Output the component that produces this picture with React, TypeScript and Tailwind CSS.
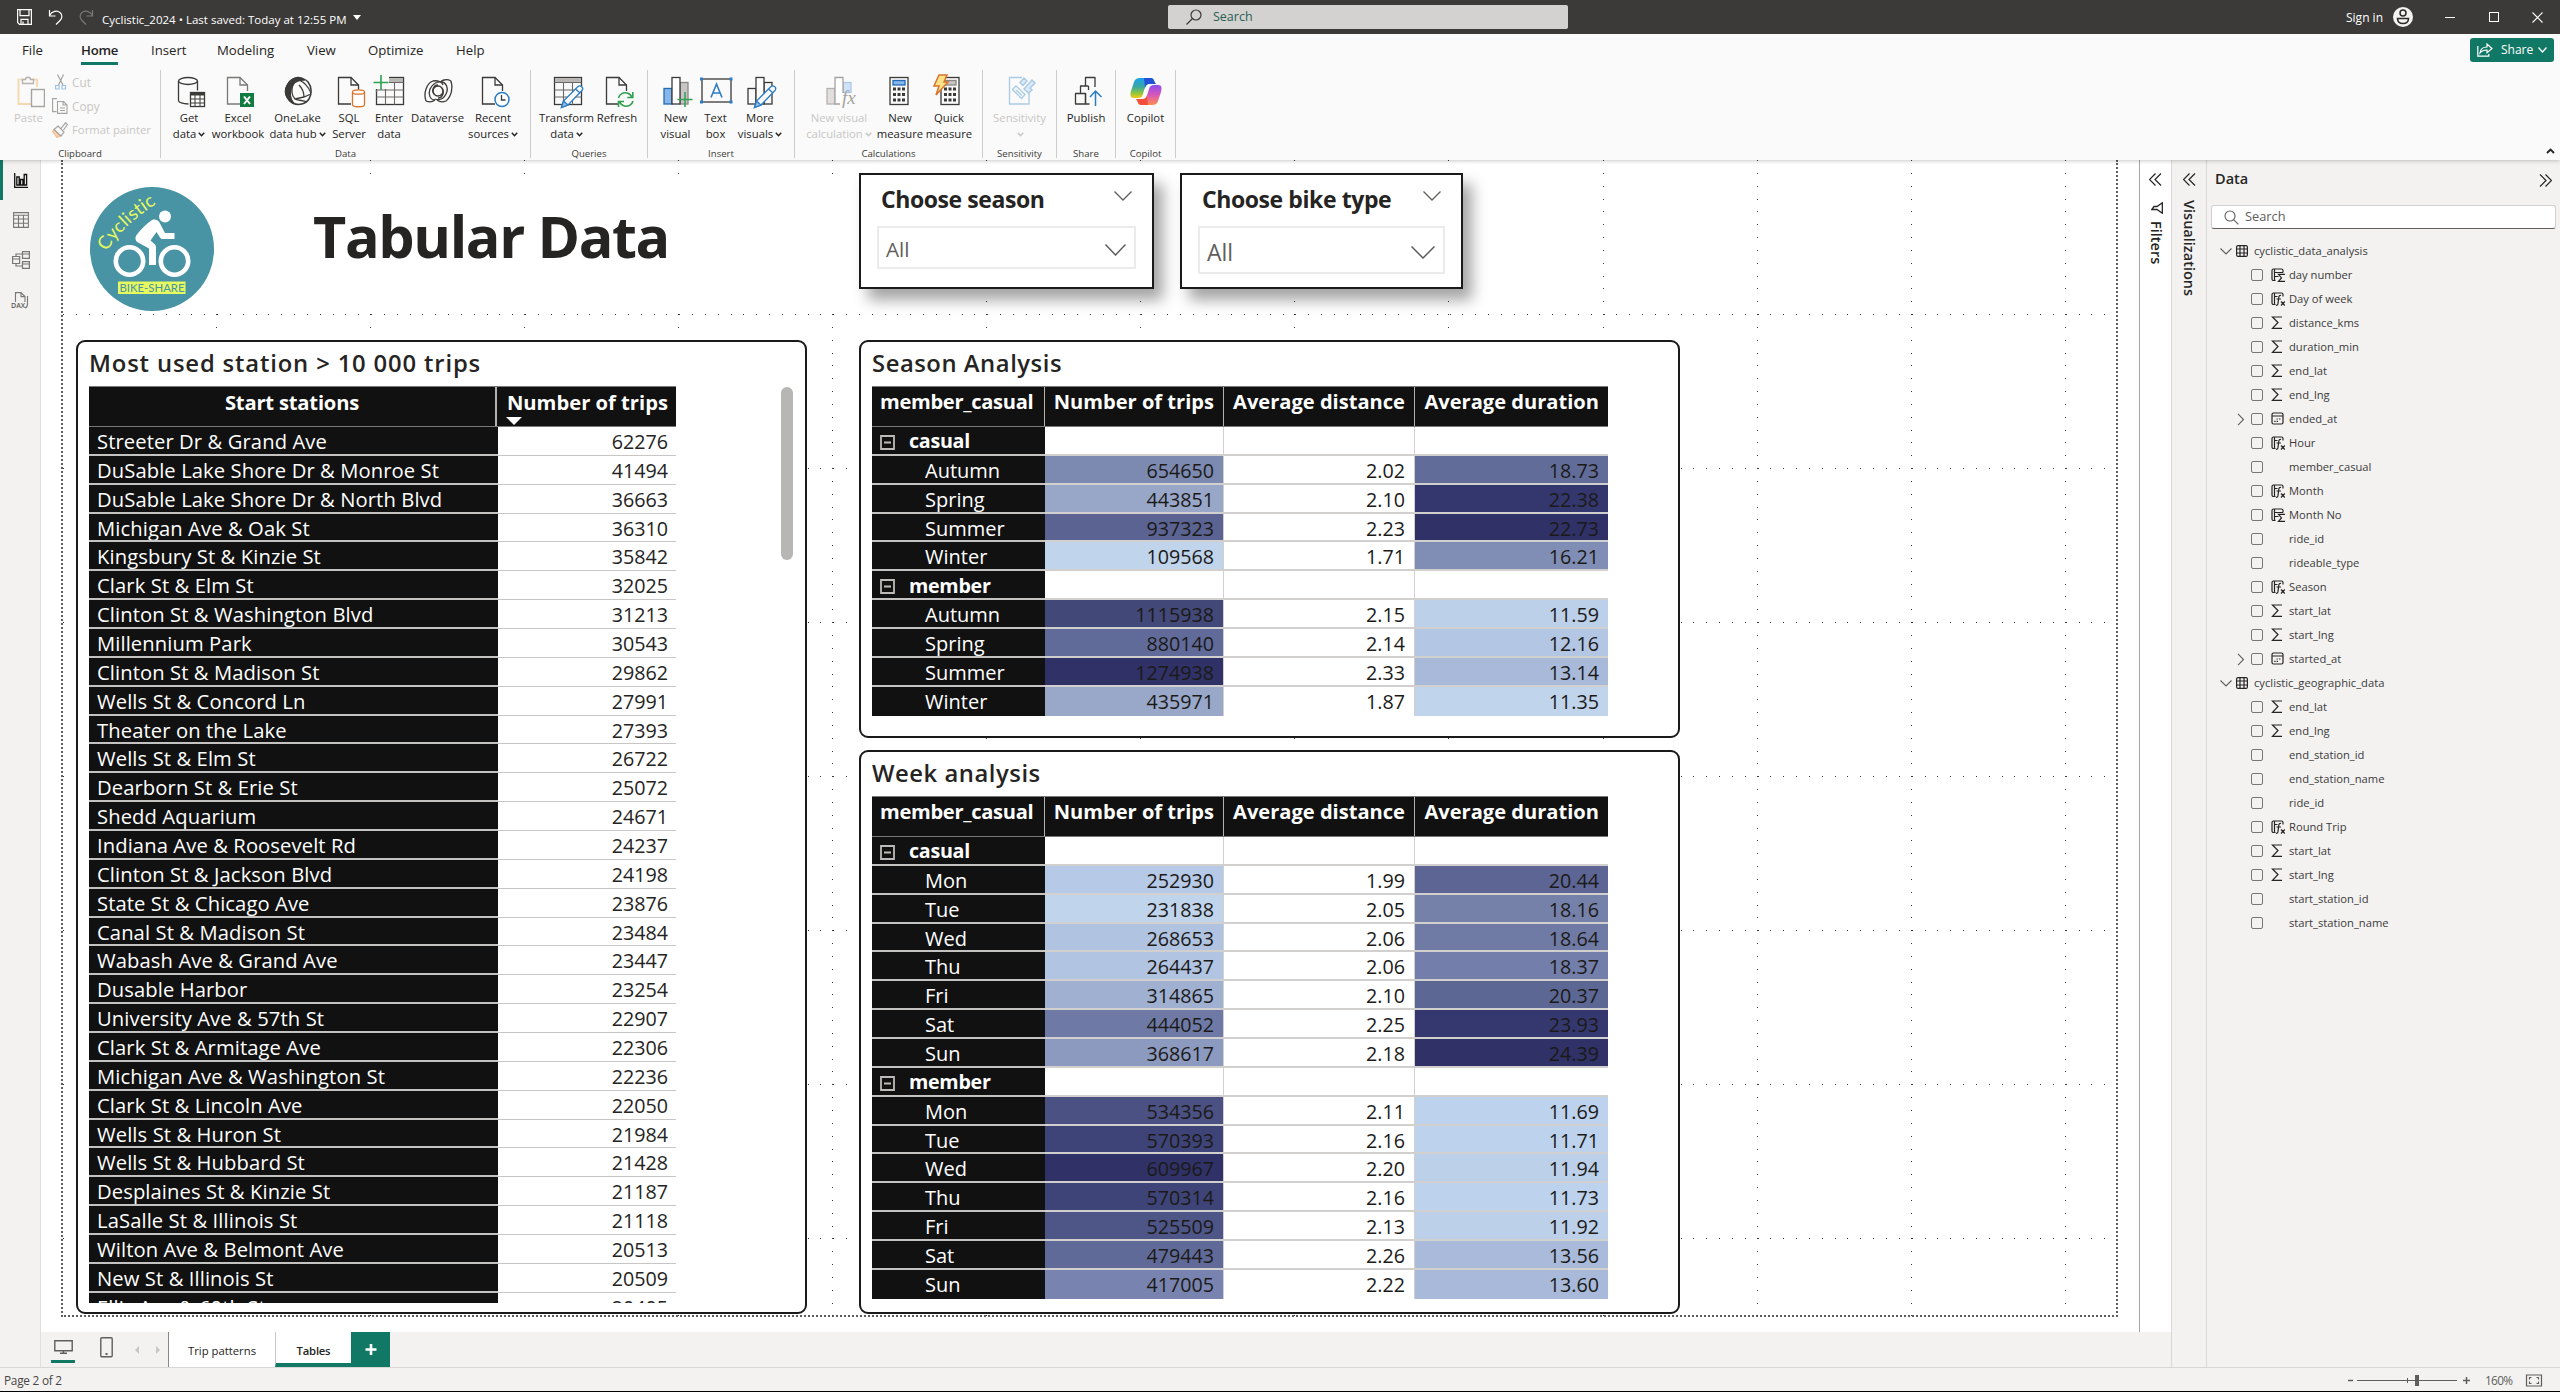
import React from "react";

type P = { children?: React.ReactNode };

/* ---------- ribbon icons ---------- */

const Ico = ({ children }: P) => (
  <svg width="32" height="34" viewBox="0 0 32 34" fill="none" stroke="#3b3a39" strokeWidth="1.3" className="overflow-visible">
    {children}
  </svg>
);

const Doc = () => (
  <>
    <path d="M18 29H5.500V2.500H18L25.500 10V16" />
    <path d="M18 2.500V10H25.500" />
  </>
);

const Pencil = () => (
  <>
    <path d="M30.500 11.500c1.500 1.200 1.600 2.600.5 4L17 30l-6.500 2.500L12.500 26 26.500 12c1.300-1.200 2.700-1.500 4-.5z" fill="#fafafa" stroke="#2b7cc4" />
    <path d="M12.500 26l4.500 4-6.500 2.500z" fill="#8fbdea" stroke="#2b7cc4" />
    <path d="M24.500 14l4.500 4" stroke="#2b7cc4" />
  </>
);

const Grid = () => (
  <>
    <rect x="3.500" y="2.500" width="27" height="27" fill="#fafafa" />
    <rect x="4" y="3" width="26" height="4.500" fill="#b9b7b5" stroke="none" />
    <path d="M3.500 7.500h27M3.500 15h27M3.500 22h27M12.500 7.500v22M21.500 7.500v22" strokeWidth="1.100" stroke="#6b6967" />
  </>
);

const icons: Record<string, React.ReactNode> = {
  get: (
    <Ico>
      <ellipse cx="15" cy="6" rx="9.500" ry="3.500" />
      <path d="M5.500 6v19.500c0 1.800 4 3.500 10 3.500M24.500 6v9.500" />
      <rect x="17.500" y="17.500" width="14" height="14" fill="#fff" />
      <path d="M17.500 19h14" strokeWidth="3" />
      <path d="M17.500 24h14M17.500 28h14M22 20v11M27 20v11" strokeWidth="1" />
    </Ico>
  ),
  excel: (
    <Ico>
      <g stroke="#7a7876"><Doc /></g>
      <rect x="18" y="18" width="14" height="14" fill="#107c41" stroke="none" />
      <path d="M22 21.500l6 7.500M28 21.500l-6 7.500" stroke="#fff" strokeWidth="2" />
    </Ico>
  ),
  lake: (
    <Ico>
      <path d="M8 6C13 2 22 2 26 7s4 12 1 17-11 7-16 4-8-8-7-13 2-7 4-9z" strokeWidth="1.500" />
      <path d="M8 7C3.500 10 2.500 16 4 20s4 7 8 9c-4-5-5-12-1-20z" fill="#3b3a39" />
      <path d="M9 6c3-4 10-5 13-1-5 0-9 1-11 5z" fill="#3b3a39" />
      <path d="M11 9c-2 7-1 12 2 15l9-2M17 10c3 3 5 7 5 12l7-3M13 24c4 2 8 1 12 3M17 5c5 2 9 6 12 13" />
    </Ico>
  ),
  sql: (
    <Ico>
      <Doc />
      <path d="M19.500 17v12.500c0 3 12 3 12 0V17" fill="#fff" stroke="#d9742b" />
      <ellipse cx="25.500" cy="17" rx="6" ry="2.200" fill="#fff" stroke="#d9742b" />
    </Ico>
  ),
  enter: (
    <Ico>
      <Grid />
      <path d="M0 0h16v14H0z" fill="#fafafa" stroke="none" />
      <path d="M12.500 14v2M3.500 15v2" stroke="#6b6967" />
      <path d="M8 0v15M.5 7.500h15" stroke="#2ea04f" strokeWidth="1.600" />
    </Ico>
  ),
  dataverse: (
    <Ico>
      <path d="M29 6c-5-3-10 0-10 1M29 6c2 6 1 15-5 20-5 2-9-1-9-1M4 26c5 2 9-1 9-1M4 26C1 18 5 8 11 6c5-1 9 1 10 4" />
      <path d="M19 7c5 0 8 6 5 12s-8 6-11 5M13 25c-5 0-7-6-5-11s8-8 11-7" />
      <circle cx="16" cy="16" r="5" />
      <path d="M20 13c3 5 0 10-4 10M12 19c-3-4 0-9 4-9" />
    </Ico>
  ),
  recent: (
    <Ico>
      <Doc />
      <circle cx="25" cy="24.500" r="7" fill="#fff" stroke="#2b7cc4" strokeWidth="1.500" />
      <path d="M24.500 20v5h4" />
    </Ico>
  ),
  transform: (<Ico><Grid /><Pencil /></Ico>),
  refresh: (
    <Ico>
      <Doc />
      <g stroke="#2ea04f" strokeWidth="1.600">
        <path d="M17.500 23c1-4 5-6 8.500-5 3 .8 4.500 3 5 4.500M31.800 17v5.500h-5.500M32 26c-1 4-5 6-8.500 5-3-.8-4.500-3-5-4.500M17.500 32v-5.500H23" />
      </g>
    </Ico>
  ),
  newvisual: (
    <Ico>
      <rect x="4" y="13.500" width="8" height="15.500" fill="#89b6e8" stroke="#1f6cb8" />
      <rect x="20" y="7.500" width="8" height="21.500" fill="#c8c6c4" stroke="#8a8886" />
      <rect x="12" y="2.500" width="8" height="26.500" fill="#fff" />
      <path d="M25 17v15M17.500 24.500h15" stroke="#2ea04f" strokeWidth="1.500" />
    </Ico>
  ),
  textbox: (
    <Ico>
      <rect x="2" y="4" width="29" height="23" />
      <path d="M0 2.500h3v3H0zM29.500 2.500h3v3h-3zM0 25.500h3v3H0zM29.500 25.500h3v3h-3z" fill="#2b7cc4" stroke="none" />
      <path d="M11 22.500L16.500 9 22 22.500M13 18h7" stroke="#2b7cc4" strokeWidth="1.600" />
    </Ico>
  ),
  more: (
    <Ico>
      <rect x="4" y="13.500" width="8" height="15.500" />
      <rect x="20" y="7.500" width="8" height="21.500" />
      <rect x="12" y="2.500" width="8" height="26.500" fill="#fff" />
      <Pencil />
    </Ico>
  ),
  calc: (
    <Ico>
      <rect x="4" y="13.500" width="8" height="15.500" fill="#e1dfdd" stroke="#b5b3b1" />
      <rect x="20" y="7.500" width="8" height="10" fill="#cfe2f6" stroke="#a8c9ea" />
      <path d="M20 18V2.500h-8V29h5" fill="#fff" stroke="#a5a3a1" />
      <text x="19" y="29" fontSize="19" fontStyle="italic" fill="#a5a3a1" stroke="none" className="font-['Liberation_Serif']">fx</text>
    </Ico>
  ),
  measure: (
    <Ico>
      <rect x="6" y="2.500" width="18" height="27" />
      <rect x="9" y="5.500" width="12" height="4.500" fill="#89b6e8" stroke="#1f6cb8" />
      <path d="M9 14h12M9 19.500h12M9 25h12" strokeWidth="3" strokeDasharray="3 1.500" />
    </Ico>
  ),
  quick: (
    <Ico>
      <rect x="8" y="2.500" width="18" height="27" />
      <rect x="12" y="5.500" width="11" height="4.500" fill="#c8c6c4" stroke="#8a8886" />
      <path d="M11 14h12M11 19.500h12M11 25h12" strokeWidth="3" strokeDasharray="3 1.500" />
      <path d="M6 0h8l-3 7h4L3 20l3-9H1z" fill="#fce38a" stroke="#d9742b" strokeWidth="1.500" />
    </Ico>
  ),
  sens: (
    <Ico>
      <path d="M18 2.500H5.500V29H25V17" stroke="#a9cbe6" />
      <path d="M8.500 14.500l3.500-3.500 9 8.500-3.500 4zM12 15l6 5.500" stroke="#a9cbe6" />
      <path d="M16 7.500l4-4.500 3 3-4 4.500zM20 14l8-9 3 3-5 5 2 2-3.500 3z" stroke="#a9cbe6" strokeWidth="1.500" fill="#dcebf7" />
    </Ico>
  ),
  publish: (
    <Ico>
      <path d="M5.500 18.500h10V29h-10zM10.500 18V11h8M15.500 11V2.500H25V12" strokeLinejoin="round" />
      <path d="M15.500 29V18M18.500 11v4M15.500 29h4" />
      <path d="M25.500 31V16M20 22l5.500-6 6 6" stroke="#2b7cc4" strokeWidth="1.500" />
    </Ico>
  ),
  copilot: (
    <svg width="32" height="34" viewBox="0 0 32 34" fill="none">
      <defs>
        <linearGradient id="ca" x1="0" y1="0" x2="0" y2="1"><stop offset="0" stopColor="#1b9ff0" /><stop offset=".45" stopColor="#3aa99f" /><stop offset=".75" stopColor="#8dc63f" /><stop offset="1" stopColor="#f6c915" /></linearGradient>
        <linearGradient id="cb" x1="0" y1="0" x2="0" y2="1"><stop offset="0" stopColor="#8b4df0" /><stop offset=".5" stopColor="#d957b8" /><stop offset="1" stopColor="#ff8f4a" /></linearGradient>
      </defs>
      <path d="M10 3h11c3 0 3 4 5 6h-7c-3 0-4 3-6 10-1 3-2 4-5 4H4c-4 0-4-3-3-7l3-9c1-3 3-4 6-4z" fill="url(#ca)" />
      <path d="M22 30H11c-3 0-3-4-5-6h7c3 0 4-3 6-10 1-3 2-4 5-4h4c4 0 4 3 3 7l-3 9c-1 3-3 4-6 4z" fill="url(#cb)" />
      <path d="M14 3h7c3 0 3 4 5 6h-7c-2 0-3 1-4 4z" fill="#2352d8" />
      <path d="M18 30h-7c-3 0-3-4-5-6h7c2 0 3-1 4-3z" fill="#f2503b" />
    </svg>
  ),
};

const Mini = () => (
  <svg width="7" height="5" viewBox="0 0 7 5" fill="none" stroke="currentColor" strokeWidth="1.500" className="ml-[2px] inline-block align-middle">
    <path d="M.8.8l2.700 2.900L6.200.8" />
  </svg>
);

const Chev = ({ w, h, s = 1.3 }: { w: number; h: number; s?: number }) => (
  <svg width={w} height={h} viewBox={`0 0 ${w} ${h}`} fill="none" stroke="currentColor" strokeWidth={s}>
    <path d={`M.5 .5L${w / 2} ${h - 1}L${w - 0.5} .5`} />
  </svg>
);

const Btn = ({ w, icon, a, b, chev, off }: { w: string; icon: string; a: string; b?: string; chev?: boolean; off?: boolean }) => (
  <div className={`flex shrink-0 flex-col items-center whitespace-nowrap pt-[5px] text-[11.3px] leading-4 ${w} ${off ? "text-[#c8c6c4]" : "text-[#252423]"}`}>
    {icons[icon]}
    <span className="mt-px h-4">{a}</span>
    <span className="h-4">{b}{chev && <Mini />}</span>
  </div>
);

const Group = ({ w, name, pad = "", children }: { w: string; name: string; pad?: string; children: React.ReactNode }) => (
  <div className={`flex h-[88px] shrink-0 flex-col border-r border-[#cfcdcb] ${w}`}>
    <div className={`flex h-[72px] ${pad}`}>{children}</div>
    <div className="mt-1 text-center text-[9.6px] leading-4 text-[#3b3a39]">{name}</div>
  </div>
);

const TitleBar = () => (
  <header className="flex h-[34px] items-center bg-[#3b3a38] text-white">
    <div className="flex w-[1168px] items-center pl-[17px]">
      <svg width="15" height="16" viewBox="0 0 15 16" fill="none" stroke="#fff" strokeWidth="1.200"><path d="M.6.6h13.800v14.800H2.500L.6 13.500zM3 .6v6h9v-6M4 15.400v-5h7v5M6 12.500v3" /></svg>
      <svg width="15" height="16" viewBox="0 0 15 16" fill="none" stroke="#fff" strokeWidth="1.200" className="ml-4"><path d="M1.500 1v6h6M1.500 6.500C4 2 9 1 12 3.500s2 6 0 8L8 15.500" /></svg>
      <svg width="15" height="16" viewBox="0 0 15 16" fill="none" stroke="#797775" strokeWidth="1.200" className="ml-4"><path d="M13.500 1v6h-6M13.500 6.500C11 2 6 1 3 3.500s-2 6 0 8L7 15.500" /></svg>
      <span className="ml-[8px] whitespace-nowrap pt-1.5 text-[11.500px]">Cyclistic_2024 • Last saved: Today at 12:55 PM</span>
      <span className="ml-[6px] h-0 w-0 border-x-4 border-t-[5px] border-x-transparent border-t-white" />
    </div>
    <div className="flex h-6 w-[400px] items-center rounded-[2px] bg-[#d3d2d0] pl-[18px] text-[12.500px] text-[#2a5f53]">
      <svg width="16" height="16" viewBox="0 0 16 16" fill="none" stroke="#3b3a39" strokeWidth="1.200"><circle cx="10" cy="6" r="5" /><path d="M6.500 9.500L.5 15.500" /></svg>
      <span className="ml-[11px]">Search</span>
    </div>
    <div className="ml-auto flex items-center pr-[17px]">
      <span className="pt-px text-[12px]">Sign in</span>
      <svg width="20" height="20" viewBox="0 0 20 20" className="ml-[10px]"><circle cx="10" cy="10" r="10" fill="#f3f2f1" /><g fill="none" stroke="#2b2a29" strokeWidth="1.500"><circle cx="10" cy="6" r="3" /><path d="M4.500 11.500h11c0 3.500-2.500 5-5.500 5s-5.500-1.500-5.500-5z" /></g></svg>
      <span className="ml-8 h-px w-[10px] bg-white" />
      <span className="ml-[34px] size-[10px] border border-white" />
      <svg width="11" height="11" viewBox="0 0 11 11" stroke="#fff" strokeWidth="1.100" className="ml-[33px]"><path d="M.5.5l10 10M10.500.5l-10 10" /></svg>
    </div>
  </header>
);

const MenuBar = () => (
  <nav className="flex h-9 items-start bg-[#fafafa] pl-[22px] text-[13.200px] leading-[30px] text-[#252423]">
    <span className="w-[59px] pt-[1px]">File</span>
    <span className="w-[70px] pt-[1px] font-semibold"><span className="inline-block h-[30px] border-b-[3px] border-[#117865] tracking-[-0.02em]">Home</span></span>
    <span className="w-[66px] pt-[1px]">Insert</span>
    <span className="w-[90px] pt-[1px]">Modeling</span>
    <span className="w-[61px] pt-[1px]">View</span>
    <span className="w-[88px] pt-[1px]">Optimize</span>
    <span className="pt-[1px]">Help</span>
    <div className="ml-auto mr-[6px] mt-1 flex h-6 w-[84px] items-center rounded-[3px] bg-[#117865] pl-[7px] text-[12px] text-white">
      <svg width="16" height="14" viewBox="0 0 16 14" fill="none" stroke="#fff" strokeWidth="1.200"><path d="M.8 3v10.200h11V11M3 10c.5-4 3-6 7-6V1l5 4.500-5 4.300V7C7 7 5 7.500 3 10z" /></svg>
      <span className="ml-[8px] mr-[5px]">Share</span>
      <Chev w={9} h={6} />
    </div>
  </nav>
);

const Ribbon = () => (
  <div className="relative z-10 flex h-[90px] bg-[#fafafa] shadow-[0_1px_4px_rgba(0,0,0,0.22)] [clip-path:inset(0_0_-8px_0)]">
    <Group w="w-[161px]" name="Clipboard">
      <div className="flex w-[57px] shrink-0 flex-col items-center pt-[5px] text-[11.300px] leading-4 text-[#c8c6c4]">
        <svg width="32" height="34" viewBox="0 0 32 34" fill="none" strokeWidth="1.400">
          <path d="M10 4.500H5.500V29H18M19 4.500h5V12" stroke="#f3d9b1" strokeWidth="2" />
          <path d="M9.500 8.500v-4h3c0-3 5-3 5 0h3v4z" stroke="#b5b3b1" fill="#fafafa" />
          <rect x="18.500" y="14.500" width="13" height="17" stroke="#a5a3a1" fill="#fafafa" />
        </svg>
        <span className="mt-px">Paste</span>
      </div>
      <div className="-ml-[2px] flex flex-col text-[11.800px] leading-6 text-[#c8c6c4]">
        <span className="flex h-6 items-center">
          <svg width="12" height="16" viewBox="0 0 12 16" fill="none" stroke="#a5a3a1" strokeWidth="1.200"><path d="M2.500.5L8 11M8.500.5L3.500 11" /><path d="M.6 11.500h3.500V15H.6zM7 11.500h3.500V15H7z" stroke="#9cc3e8" /></svg>
          <span className="ml-[5px]">Cut</span>
        </span>
        <span className="flex h-6 items-center">
          <svg width="16" height="16" viewBox="0 0 16 16" fill="none" stroke="#a5a3a1" strokeWidth="1.100" className="-ml-[3px]"><path d="M5 .6H.6v13h4M5.500 3.500h6l3.500 3.500v8.400H5.500zM11 3.500V7h4M8 10h5M8 12.500h5" /></svg>
          <span className="ml-[4px]">Copy</span>
        </span>
        <span className="flex h-6 items-center whitespace-nowrap">
          <svg width="16" height="16" viewBox="0 0 16 16" fill="none" stroke="#a5a3a1" strokeWidth="1.200" className="-ml-[3px]"><path d="M2 7.500l6 6.500-3 1.500L.8 9.500z" fill="#f7d5b0" stroke="#f0c08c" /><path d="M6 4l6 6-3 4-7-6.500zM9 6.500L13.500.8l2 1.700L11.500 8" /></svg>
          <span className="ml-[4px] text-[11.300px]">Format painter</span>
        </span>
      </div>
    </Group>
    <Group w="w-[370px]" name="Data" pad="pl-[3px]">
      <Btn w="w-[50px]" icon="get" a="Get" b="data" chev />
      <Btn w="w-[48px]" icon="excel" a="Excel" b="workbook" />
      <Btn w="w-[71px]" icon="lake" a="OneLake" b="data hub" chev />
      <Btn w="w-[32px]" icon="sql" a="SQL" b="Server" />
      <Btn w="w-[48px]" icon="enter" a="Enter" b="data" />
      <Btn w="w-[49px]" icon="dataverse" a="Dataverse" />
      <Btn w="w-[62px]" icon="recent" a="Recent" b="sources" chev />
    </Group>
    <Group w="w-[117px]" name="Queries" pad="pl-[6px]">
      <Btn w="w-[59px]" icon="transform" a="Transform" b="data" chev />
      <Btn w="w-[42px]" icon="refresh" a="Refresh" />
    </Group>
    <Group w="w-[147px]" name="Insert" pad="pl-[8px]">
      <Btn w="w-[39px]" icon="newvisual" a="New" b="visual" />
      <Btn w="w-[41px]" icon="textbox" a="Text" b="box" />
      <Btn w="w-[48px]" icon="more" a="More" b="visuals" chev />
    </Group>
    <Group w="w-[188px]" name="Calculations" pad="pl-[8px]">
      <Btn w="w-[72px]" icon="calc" a="New visual" b="calculation" chev off />
      <Btn w="w-[50px]" icon="measure" a="New" b="measure" />
      <Btn w="w-[48px]" icon="quick" a="Quick" b="measure" />
    </Group>
    <Group w="w-[74px]" name="Sensitivity"><Btn w="w-full" icon="sens" a="Sensitivity" chev off /></Group>
    <Group w="w-[59px]" name="Share"><Btn w="w-full" icon="publish" a="Publish" /></Group>
    <Group w="w-[60px]" name="Copilot"><Btn w="w-full" icon="copilot" a="Copilot" /></Group>
    <svg width="9" height="6" viewBox="0 0 9 6" fill="none" stroke="#252423" strokeWidth="1.800" className="ml-auto mr-[5px] mt-[78px]"><path d="M1 5l3.500-3.500L8 5" /></svg>
  </div>
);

/* ---------- report page ---------- */

const vLines = Array.from({ length: 13 }, (_, i) => 154.05 * (i + 1));
const hLines = Array.from({ length: 7 }, (_, i) => 154.05 * (i + 1));

const Dots = () => (
  <svg width="2054" height="1156" className="absolute left-0 top-0" stroke="#3b3a39" strokeWidth="1" strokeDasharray="1 11.838" shapeRendering="crispEdges">
    {vLines.map((x) => <line key={x} x1={Math.round(x) - 0.5} x2={Math.round(x) - 0.5} y1="0" y2="1156" />)}
    {hLines.map((y) => <line key={y} x1="0" x2="2054" y1={Math.round(y) + 0.5} y2={Math.round(y) + 0.5} />)}
  </svg>
);

const Logo = () => (
  <svg width="124" height="126" viewBox="0 0 124 126">
    <defs><path id="arc" d="M17 65.500Q31 41 66 18" /></defs>
    <circle cx="62" cy="63" r="62" fill="#4893a4" />
    <text fontSize="18.500" fill="#e6f95f" letterSpacing="0.300" className="font-['Lato']"><textPath href="#arc">Cyclistic</textPath></text>
    <g fill="none" stroke="#fff" strokeWidth="4.600">
      <circle cx="39.500" cy="75" r="13.700" />
      <circle cx="84.500" cy="75" r="13.700" />
    </g>
    <circle cx="75" cy="30.500" r="6" fill="#fff" />
    <path d="M62 34c3-1 6 0 7.500 2.500L75 47h9.500v6H72.500c-1 0-2-.7-2.500-1.500l-3.500-5.500-6 8.500 4 3.500c1 .8 1.500 2 1.500 3.500V79h-7V62.500L48 56.500c-2.500-1.500-3.500-4.500-1.500-7.500 5-6 10-11.500 15.500-15z" fill="#fff" />
    <path d="M28 95.500h67.500v12.500H28z" fill="#e6f95f" />
    <text x="29.500" y="105.800" fontSize="11" fill="#4893a4" textLength="65" lengthAdjust="spacingAndGlyphs" className="font-['Lato']">BIKE-SHARE</text>
  </svg>
);

const stations: [string, string][] = [
  ["Streeter Dr & Grand Ave", "62276"],
  ["DuSable Lake Shore Dr & Monroe St", "41494"],
  ["DuSable Lake Shore Dr & North Blvd", "36663"],
  ["Michigan Ave & Oak St", "36310"],
  ["Kingsbury St & Kinzie St", "35842"],
  ["Clark St & Elm St", "32025"],
  ["Clinton St & Washington Blvd", "31213"],
  ["Millennium Park", "30543"],
  ["Clinton St & Madison St", "29862"],
  ["Wells St & Concord Ln", "27991"],
  ["Theater on the Lake", "27393"],
  ["Wells St & Elm St", "26722"],
  ["Dearborn St & Erie St", "25072"],
  ["Shedd Aquarium", "24671"],
  ["Indiana Ave & Roosevelt Rd", "24237"],
  ["Clinton St & Jackson Blvd", "24198"],
  ["State St & Chicago Ave", "23876"],
  ["Canal St & Madison St", "23484"],
  ["Wabash Ave & Grand Ave", "23447"],
  ["Dusable Harbor", "23254"],
  ["University Ave & 57th St", "22907"],
  ["Clark St & Armitage Ave", "22306"],
  ["Michigan Ave & Washington St", "22236"],
  ["Clark St & Lincoln Ave", "22050"],
  ["Wells St & Huron St", "21984"],
  ["Wells St & Hubbard St", "21428"],
  ["Desplaines St & Kinzie St", "21187"],
  ["LaSalle St & Illinois St", "21118"],
  ["Wilton Ave & Belmont Ave", "20513"],
  ["New St & Illinois St", "20509"],
  ["Ellis Ave & 60th St", "20405"],
];

const StationTable = () => (
  <div className="mt-[7px] h-[917px] w-[587px] overflow-hidden text-[19.700px]">
    <div className="flex h-[41px] border-y border-[#7a7876] bg-[#111] text-[20.200px] font-bold text-white">
      <div className="w-[408px] border-r-2 border-[#b3b0ad] text-center leading-[31px] tracking-[-0.01em]">Start stations</div>
      <div className="flex-1 whitespace-nowrap pr-2 text-right leading-[31px]">
        Number of trips
        <div className="-mt-px ml-[9px] h-0 w-0 border-x-8 border-t-8 border-x-transparent border-t-white" />
      </div>
    </div>
    {stations.map(([name, n]) => (
      <div key={name} className="flex h-[28.870px] leading-[29.500px]">
        <div className="w-[409px] overflow-hidden whitespace-nowrap border-b-2 border-[#c5c3c1] bg-[#111] pl-2 text-[20.200px] tracking-[0.005em] text-white">{name}</div>
        <div className="flex-1 border-b border-[#c8c6c4] pr-2 text-right text-[#252423]">{n}</div>
      </div>
    ))}
  </div>
);

type Row = [string, string?, string?, string?, string?, string?];

const season: Row[] = [
  ["casual"],
  ["Autumn", "654650", "bg-[#7c8ab1]", "2.02", "18.73", "bg-[#616c99]"],
  ["Spring", "443851", "bg-[#98a6c8]", "2.10", "22.38", "bg-[#34376d]"],
  ["Summer", "937323", "bg-[#5a6391]", "2.23", "22.73", "bg-[#2f3167]"],
  ["Winter", "109568", "bg-[#c0d4ec]", "1.71", "16.21", "bg-[#808eb5]"],
  ["member"],
  ["Autumn", "1115938", "bg-[#424878]", "2.15", "11.59", "bg-[#bcd0e9]"],
  ["Spring", "880140", "bg-[#606b99]", "2.14", "12.16", "bg-[#b3c6e3]"],
  ["Summer", "1274938", "bg-[#2f3167]", "2.33", "13.14", "bg-[#a8b9d9]"],
  ["Winter", "435971", "bg-[#99a7c9]", "1.87", "11.35", "bg-[#c0d4ec]"],
];

const week: Row[] = [
  ["casual"],
  ["Mon", "252930", "bg-[#b6c9e6]", "1.99", "20.44", "bg-[#5c6593]"],
  ["Tue", "231838", "bg-[#c0d4ec]", "2.05", "18.16", "bg-[#7681aa]"],
  ["Wed", "268653", "bg-[#b0c3e1]", "2.06", "18.64", "bg-[#707ba5]"],
  ["Thu", "264437", "bg-[#b1c4e2]", "2.06", "18.37", "bg-[#737faa]"],
  ["Fri", "314865", "bg-[#9fb0d1]", "2.10", "20.37", "bg-[#5d6794]"],
  ["Sat", "444052", "bg-[#6e7aa5]", "2.25", "23.93", "bg-[#35386e]"],
  ["Sun", "368617", "bg-[#8c9abf]", "2.18", "24.39", "bg-[#2f3167]"],
  ["member"],
  ["Mon", "534356", "bg-[#4b5183]", "2.11", "11.69", "bg-[#bdd2ec]"],
  ["Tue", "570393", "bg-[#3e4477]", "2.16", "11.71", "bg-[#bdd2ec]"],
  ["Wed", "609967", "bg-[#2f3167]", "2.20", "11.94", "bg-[#bcd0ea]"],
  ["Thu", "570314", "bg-[#3e4477]", "2.16", "11.73", "bg-[#bdd2ec]"],
  ["Fri", "525509", "bg-[#4e5587]", "2.13", "11.92", "bg-[#bcd0ea]"],
  ["Sat", "479443", "bg-[#606a98]", "2.26", "13.56", "bg-[#a9badb]"],
  ["Sun", "417005", "bg-[#7884af]", "2.22", "13.60", "bg-[#a8b9da]"],
];

const Matrix = ({ rows }: { rows: Row[] }) => (
  <div className="w-[736px] text-[19.700px]">
    <div className="grid h-[41px] grid-cols-[173px_179px_191px_193px] border-y border-[#7a7876] bg-[#111] text-right text-[20.100px] font-bold leading-[30px] text-white">
      <div className="whitespace-nowrap border-r border-[#b3b0ad] pl-[8px] text-left tracking-[-0.015em]">member_casual</div>
      <div className="whitespace-nowrap border-r border-[#b3b0ad] pr-[9px]">Number of trips</div>
      <div className="whitespace-nowrap border-r border-[#b3b0ad] pr-[9px]">Average distance</div>
      <div className="whitespace-nowrap pr-[9px]">Average duration</div>
    </div>
    {rows.map(([name, trips, tc, dist, dur, dc], i) => {
      const last = i === rows.length - 1 ? "" : "border-b-2";
      return (
        <div key={i} className="grid h-[28.870px] grid-cols-[173px_179px_191px_193px] grid-rows-[28.870px] text-right leading-[30px] text-[#1b1a19]">
          {trips ? (
            <div className={`overflow-hidden border-[#c5c3c1] bg-[#111] pl-[53px] text-left text-[20px] text-white ${last}`}>{name}</div>
          ) : (
            <div className={`flex items-center border-[#c5c3c1] bg-[#111] pl-2 font-bold tracking-[-0.015em] text-white ${last}`}>
              <svg width="15" height="15" viewBox="0 0 15 15" fill="none" stroke="#bdbbb9" strokeWidth="1.800" className="mr-[14px] mt-[4px]"><path d="M1 1h13v13H1zM4 7.500h7" /></svg>
              <span className="pt-[2px]">{name}</span>
            </div>
          )}
          <div className={`border-r border-[#d2d0ce] pr-[9px] ${tc ?? "bg-white"} ${last}`}>{trips}</div>
          <div className={`border-r border-[#d2d0ce] bg-white pr-[9px] ${last}`}>{dist}</div>
          <div className={`border-[#d2d0ce] pr-[9px] ${dc ?? "bg-white"} ${last}`}>{dur}</div>
        </div>
      );
    })}
  </div>
);

const Slicer = ({ w, title, box, all, cw, ch }: { w: string; title: string; box: string; all: string; cw: number; ch: number }) => (
  <div className={`h-[116px] border-2 border-[#1a1a1a] bg-white px-[16px] pt-[8px] shadow-[9px_11px_14px_rgba(0,0,0,0.36)] ${w}`}>
    <div className="flex items-start justify-between pl-[4px] pr-1 text-[#605e5c]">
      <span className="whitespace-nowrap text-[23px] font-bold leading-8 tracking-[-0.018em] text-[#252423]">{title}</span>
      <span className="mt-[8px]"><Chev w={18} h={10} /></span>
    </div>
    <div className={`mt-[11px] flex items-center justify-between border-2 border-[#ebebeb] pl-[7px] pr-[8px] pt-[4px] text-[#605e5c] ${box}`}>
      <span className={all}>All</span>
      <Chev w={cw} h={ch} s={1.5} />
    </div>
  </div>
);

const panel = "rounded-[9px] border-2 border-[#1a1a1a] bg-white";
const heading = "whitespace-nowrap text-[23.800px] leading-8 font-semibold text-[#252423]";

const ReportPage = () => (
  <main className="h-[1172px] w-[2098px] bg-white pl-5">
    <div className="relative h-[1157px] w-[2057px] border-x-2 border-b-2 border-dotted border-[#605e5c]">
      <Dots />
      <div className="relative flex h-[180px]">
        <div className="h-[149px] w-[178px] bg-white pl-[27px] pt-[26px]"><Logo /></div>
        <div className="mt-4 h-[134px] w-[600px] bg-white pl-[72px] pt-[20px]">
          <h1 className="whitespace-nowrap text-[57.500px] font-bold leading-[80px] tracking-[-0.024em] text-[#252423]">Tabular Data</h1>
        </div>
        <div className="ml-[18px] mt-[13px] flex gap-[26px]">
          <Slicer w="w-[295px]" title="Choose season" box="h-[43px]" all="text-[20.700px]" cw={21} ch={12} />
          <Slicer w="w-[283px]" title="Choose bike type" box="h-[48px]" all="text-[23px]" cw={24} ch={13} />
        </div>
      </div>
      <div className="relative flex pl-[13px]">
        <section className={`flex h-[974px] w-[731px] justify-between pl-[11px] pr-[12px] pt-[4px] ${panel}`}>
          <div>
            <h2 className={`${heading} pt-[1px] tracking-[0.036em]`}>Most used station &gt; 10 000 trips</h2>
            <StationTable />
          </div>
          <div className="mt-[41px] h-[173px] w-[12px] rounded-full bg-[#b8b6b4]" />
        </section>
        <div className="ml-[52px] flex flex-col gap-[12px]">
          <section className={`h-[398px] w-[821px] pl-[11px] pt-[5px] ${panel}`}>
            <h2 className={`${heading} pb-[7px] tracking-[0.023em]`}>Season Analysis</h2>
            <Matrix rows={season} />
          </section>
          <section className={`h-[564px] w-[821px] pl-[11px] pt-[5px] ${panel}`}>
            <h2 className={`${heading} pb-[7px] tracking-[0.023em]`}>Week analysis</h2>
            <Matrix rows={week} />
          </section>
        </div>
      </div>
    </div>
  </main>
);

/* ---------- side rails ---------- */

const ViewRail = () => (
  <aside className="flex w-[41px] flex-col border-r border-[#e1dfdd] bg-[#f3f2f1]">
    <div className="flex h-10 items-center border-l-[3px] border-[#117865] pl-[11px]">
      <svg width="15" height="15" viewBox="0 0 15 15" fill="none" stroke="#111" strokeWidth="1.300"><path d="M.7 0v14.300H14M2.800 4h2.400v8H2.800zM6.500 6.500h2.400V12H6.500zM10.200 1.500h2.400V12h-2.400z" /></svg>
    </div>
    <div className="flex h-10 items-center pl-[13px]">
      <svg width="16" height="16" viewBox="0 0 16 16" fill="none" stroke="#797775" strokeWidth="1.100"><path d="M.6.6h14.800v14.800H.6zM.6 3.200h14.800M.6 7h14.800M.6 11.200h14.800M5.500 3.200v12M10.500 3.200v12" /></svg>
    </div>
    <div className="flex h-10 items-center pl-[12px]">
      <svg width="18" height="18" viewBox="0 0 18 18" fill="none" stroke="#797775" strokeWidth="1.200"><path d="M.6 5.500h7v7h-7zM.6 8h7M10.500.7h6.900v6.600h-6.900zM10.500 3h6.900M10.500 10.700h6.900v6.600h-6.900zM10.500 13h6.900M4 5.500V3h6.500M4 12.500V15h6.500" /></svg>
    </div>
    <div className="flex h-10 items-center pl-[11px]">
      <svg width="18" height="17" viewBox="0 0 18 17" fill="none" stroke="#797775" strokeWidth="1.100"><path d="M4.500 10V.6H10L14 4.600V10M10 .6v4h4M16.500 4v8c0 2-1 3.500-2.500 4" /><text x="0" y="16" fontSize="7" fill="#5a5856" stroke="none" className="font-['Open_Sans'] font-semibold">DAX</text></svg>
    </div>
  </aside>
);

const Dbl = ({ right }: { right?: boolean }) => (
  <svg width="13" height="13" viewBox="0 0 13 13" fill="none" stroke="#252423" strokeWidth="1.200" className={right ? "rotate-180" : ""}><path d="M6.500.5l-6 6 6 6M12 .5l-6 6 6 6" /></svg>
);

type Kind = "sum" | "colsum" | "colfx" | "date" | "none";

const FieldIcon = ({ k }: { k: Kind }) => (
  <svg width="14" height="14" viewBox="0 0 14 14" fill="none" stroke="#252423" strokeWidth="1.200" className="ml-2 shrink-0">
    {k === "sum" && <path d="M11 1H1.500L7 6.500l-5.500 5.800H11" />}
    {(k === "colsum" || k === "colfx") && <path d="M4.500 12.500h-2A1.500 1.500 0 011 11V2.500A1.500 1.500 0 012.500 1h8A1.500 1.500 0 0112 2.500V4.500M3.500 1v11.500" />}
    {k === "colsum" && <path d="M3.500 4.500h8.500M3.500 8.500h4M14 6.300H7.500l3 3.600-3 3.500H14" />}
    {k === "colfx" && <path d="M3.500 4.500h3M10 3.500c-1.700-.3-2.100.8-2.300 2.300L7 11.500c-.2 1.500-1 2-2 1.700M5.500 7h4.500M10 9.500l3.800 4M13.800 9.500l-3.800 4" />}
    {k === "date" && <path d="M2.500 1h8A1.500 1.500 0 0112 2.500v8a1.500 1.500 0 01-1.500 1.500h-8A1.500 1.500 0 011 10.500v-8A1.500 1.500 0 012.500 1zM1 4h11M5.500 7h1.300M8 7h1.500M3.200 9.300h1.400M5.700 9.300h1.300" />}
  </svg>
);

const Field = ({ name, k, open }: { name: string; k: Kind; open?: boolean }) => (
  <div className="flex h-6 items-center pl-[30px]">
    <span className="w-[14px] text-[#605e5c]">
      {open && <svg width="8" height="13" viewBox="0 0 8 13" fill="none" stroke="currentColor" strokeWidth="1.100"><path d="M1 .8l5.500 5.700L1 12.200" /></svg>}
    </span>
    <span className="size-3 shrink-0 rounded-[2px] border border-[#797775]" />
    <FieldIcon k={k} />
    <span className="ml-[4px]">{name}</span>
  </div>
);

const TableNode = ({ name, children }: { name: string; children: React.ReactNode }) => (
  <>
    <div className="flex h-6 items-center pl-[13px]">
      <span className="text-[#605e5c]"><Chev w={12} h={7} s={1.1} /></span>
      <svg width="12" height="12" viewBox="0 0 12 12" fill="none" stroke="#252423" strokeWidth="1.200" className="ml-[4px]"><rect x=".6" y=".6" width="10.800" height="10.800" rx="1.500" /><path d="M4 .6v10.800M8 .6v10.800M.6 4h10.800M.6 8h10.800" /></svg>
      <span className="ml-[6px]">{name}</span>
    </div>
    {children}
  </>
);

const DataPane = () => (
  <aside className="flex w-[354px] flex-col border-l border-[#dad8d6] bg-[#f3f2f1] text-[11.200px] text-[#3b3a39]">
    <div className="flex h-10 items-center justify-between pl-[8px] pr-[8px] text-[14.500px] font-semibold text-[#252423]"><span className="pb-[2px]">Data</span> <Dbl right /></div>
    <div className="ml-[4px] mt-[5px] flex h-6 w-[345px] items-center rounded-[3px] border border-b-[#605e5c] border-[#d1d1d1] bg-white pl-3 text-[12.800px] text-[#605e5c]">
      <svg width="15" height="15" viewBox="0 0 15 15" fill="none" stroke="#605e5c" strokeWidth="1.100"><circle cx="6" cy="6" r="5" /><path d="M9.600 9.600l4.700 4.700" /></svg>
      <span className="ml-[6px]">Search</span>
    </div>
    <div className="mt-[10px]">
      <TableNode name="cyclistic_data_analysis">
        <Field name="day number" k="colsum" />
        <Field name="Day of week" k="colfx" />
        <Field name="distance_kms" k="sum" />
        <Field name="duration_min" k="sum" />
        <Field name="end_lat" k="sum" />
        <Field name="end_lng" k="sum" />
        <Field name="ended_at" k="date" open />
        <Field name="Hour" k="colfx" />
        <Field name="member_casual" k="none" />
        <Field name="Month" k="colfx" />
        <Field name="Month No" k="colsum" />
        <Field name="ride_id" k="none" />
        <Field name="rideable_type" k="none" />
        <Field name="Season" k="colfx" />
        <Field name="start_lat" k="sum" />
        <Field name="start_lng" k="sum" />
        <Field name="started_at" k="date" open />
      </TableNode>
      <TableNode name="cyclistic_geographic_data">
        <Field name="end_lat" k="sum" />
        <Field name="end_lng" k="sum" />
        <Field name="end_station_id" k="none" />
        <Field name="end_station_name" k="none" />
        <Field name="ride_id" k="none" />
        <Field name="Round Trip" k="colfx" />
        <Field name="start_lat" k="sum" />
        <Field name="start_lng" k="sum" />
        <Field name="start_station_id" k="none" />
        <Field name="start_station_name" k="none" />
      </TableNode>
    </div>
  </aside>
);

const vtext = "text-[14.500px] font-semibold leading-4 text-[#252423] [writing-mode:vertical-rl]";

const PageTabs = () => (
  <div className="flex h-[35px] bg-[#f3f2f1] text-[11.300px] text-[#252423]">
    <div className="flex w-[127px] items-start pl-[10px]">
      <div className="flex h-[31px] w-6 flex-col items-center justify-between border-b-[3px] border-[#117865] pt-2">
        <svg width="19" height="14" viewBox="0 0 19 14" fill="none" stroke="#605e5c" strokeWidth="1.400"><path d="M.8.8h17.400v10H.8zM9.500 11v2.300M6 13.300h7" /></svg>
      </div>
      <svg width="14" height="21" viewBox="0 0 14 21" fill="none" stroke="#605e5c" strokeWidth="1.400" className="ml-[25px] mt-[5px]"><rect x=".8" y=".8" width="11.400" height="19" rx="1" /><path d="M5.500 17h2" strokeWidth="2" /></svg>
      <span className="ml-[21px] mt-[14px] h-0 w-0 border-y-4 border-r-4 border-y-transparent border-r-[#c8c6c4]" />
      <span className="ml-[17px] mt-[14px] h-0 w-0 border-y-4 border-l-4 border-y-transparent border-l-[#c8c6c4]" />
    </div>
    <div className="w-[107px] border-l border-[#8a8886] bg-white text-center leading-[37px]">Trip patterns</div>
    <div className="w-[76px] border-b-4 border-l border-b-[#117865] border-l-[#c8c6c4] bg-white text-center font-semibold leading-[37px] tracking-[-0.02em]">Tables</div>
    <div className="flex w-[39px] items-center justify-center bg-[#117865]">
      <svg width="12" height="12" viewBox="0 0 12 12" stroke="#fff" strokeWidth="2.600"><path d="M6 0v11M.5 5.500h11" /></svg>
    </div>
  </div>
);

const StatusBar = () => (
  <footer className="flex h-[25px] items-center border-b border-t border-b-black border-t-[#dad8d6] bg-[#f3f2f1] pl-1 text-[11.800px] text-[#484644]">
    <span className="pt-[2px] tracking-[-0.02em]">Page 2 of 2</span>
    <svg width="196" height="16" viewBox="0 0 196 16" fill="none" stroke="#605e5c" strokeWidth="1" className="ml-auto mr-[17px]">
      <path d="M1 8.500h5M116 8.500h7M119.500 5v7" strokeWidth="1.500" />
      <path d="M10 8.500h100M60.500 6v5" />
      <path d="M70 3v11" strokeWidth="4" />
      <text x="138" y="13" fontSize="11.800" fill="#605e5c" stroke="none" textLength="28" className="font-['Open_Sans']">160%</text>
      <path d="M179.500 3h15v11h-15zM182.500 7.500V5.500h2M189.500 5.500h2v2M191.500 9.500v2h-2M184.500 11.500h-2v-2" strokeWidth="1.200" />
    </svg>
  </footer>
);

export default function App() {
  return (
    <div className="flex h-[1392px] w-[2560px] flex-col overflow-hidden bg-[#f3f2f1] font-['Open_Sans','Noto_Sans',sans-serif]">
      <TitleBar />
      <MenuBar />
      <Ribbon />
      <div className="flex h-[1207px]">
        <ViewRail />
        <div className="flex w-[2130px] flex-col">
          <div className="flex h-[1172px]">
            <ReportPage />
            <aside className="flex w-8 flex-col items-center border-l border-[#a8a6a4] bg-white pt-[13px]">
              <Dbl />
              <svg width="12" height="12" viewBox="0 0 12 12" fill="none" stroke="#252423" strokeWidth="1.300" className="ml-[3px] mt-4"><path d="M11.300.8v10.400L6 7.500H.8L3 4.500h3z" /></svg>
              <span className={`mt-[7px] ${vtext}`}>Filters</span>
            </aside>
          </div>
          <PageTabs />
        </div>
        <aside className="flex w-[35px] flex-col items-center border-l border-[#dad8d6] bg-[#f3f2f1] pt-[13px]">
          <Dbl />
          <span className={`mt-[14px] ${vtext}`}>Visualizations</span>
        </aside>
        <DataPane />
      </div>
      <StatusBar />
    </div>
  );
}
